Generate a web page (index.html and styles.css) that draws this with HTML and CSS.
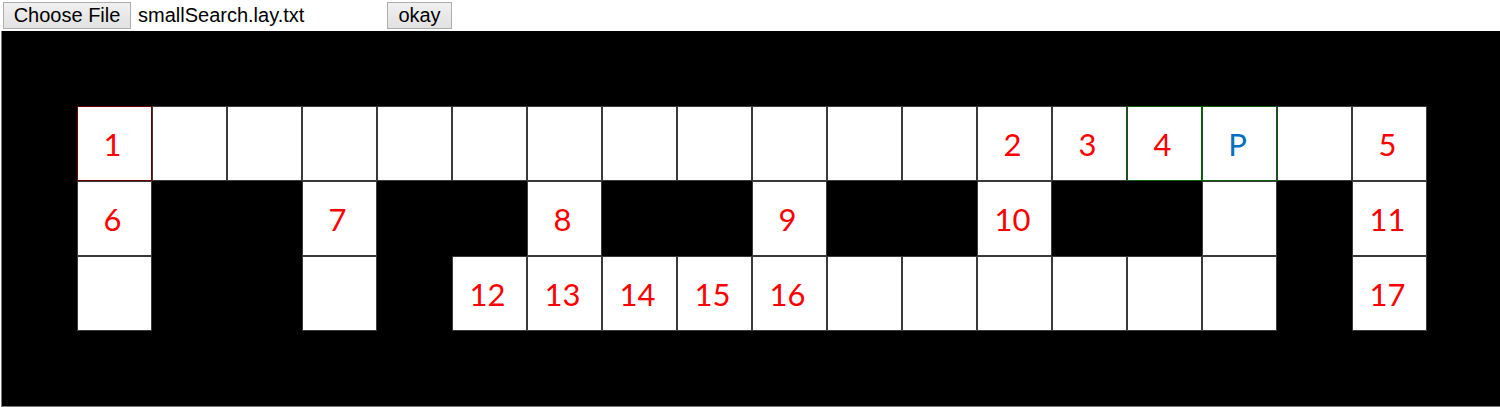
FILE: index.html
```html
<!DOCTYPE html>
<html>
<head>
<meta charset="utf-8">
<link rel="stylesheet" href="styles.css">
</head>
<body>
<div class="controls">
  <span class="btn choose">Choose File</span>
  <span class="filename">smallSearch.lay.txt</span>
  <button class="btn okay">okay</button>
</div>
<div class="board" id="board"></div>
<script>
  var open = {
    "1,1":"1","1,13":"2","1,14":"3","1,15":"4","1,16":"P","1,17":"","1,18":"5",
    "2,1":"6","2,4":"7","2,7":"8","2,10":"9","2,13":"10","2,16":"","2,18":"11",
    "3,1":"","3,4":"","3,6":"12","3,7":"13","3,8":"14","3,9":"15","3,10":"16",
    "3,11":"","3,12":"","3,13":"","3,14":"","3,15":"","3,16":"","3,18":"17"
  };
  for (var c = 1; c <= 18; c++) if (!("1," + c in open)) open["1," + c] = "";
  var board = document.getElementById("board");
  for (var r = 0; r < 5; r++) {
    for (var c = 0; c < 20; c++) {
      var key = r + "," + c;
      var d = document.createElement("div");
      if (key in open) {
        d.className = "cell open";
        var t = open[key];
        d.textContent = t;
        if (t === "P") d.className += " pac goal";
        if (t === "1") d.className += " start";
        if (t === "4") d.className += " goal";
      } else {
        d.className = "cell wall";
      }
      board.appendChild(d);
    }
  }
</script>
</body>
</html>
```
FILE: styles.css
```css
html, body {
  margin: 0;
  padding: 0;
  background: #fff;
  overflow: hidden;
}
body {
  width: 1500px;
  height: 407px;
}
.controls {
  height: 31px;
  display: flex;
  align-items: center;
  padding-left: 3px;
  box-sizing: border-box;
  font-family: "Liberation Sans", Arial, sans-serif;
  font-size: 20px;
  color: #000;
}
.btn {
  height: 27px;
  box-sizing: border-box;
  border: 1px solid #adadad;
  background: linear-gradient(#f0f0f0, #e1e1e1);
  font-family: "Liberation Sans", Arial, sans-serif;
  font-size: 20px;
  color: #000;
  display: inline-flex;
  align-items: center;
  justify-content: center;
  padding: 0;
  margin: 0;
}
.choose {
  width: 128px;
}
.filename {
  margin-left: 7px;
  width: 249px;
}
.okay {
  width: 65px;
}
.board {
  display: grid;
  grid-template-columns: repeat(20, 75px);
  grid-template-rows: repeat(5, 75px);
  margin-left: 1px;
  width: 1499px;
  height: 376px;
  box-sizing: border-box;
  border-left: 1px solid #7a7a7a;
  border-bottom: 1px solid #7a7a7a;
  background: #000;
}
.cell {
  box-sizing: border-box;
  display: flex;
  align-items: center;
  justify-content: center;
  padding-right: 4px;
  font-family: Lato, "Open Sans", sans-serif;
  font-size: 31px;
  color: #ff0000;
}
.wall {
  background: #000;
}
.open {
  background: #fff;
  border: 1px solid #3a3a3a;
}
.start {
  border-color: #6b0000;
}
.goal {
  border-color: #0b5e0b;
}
.pac {
  color: #0070c0;
}
```
